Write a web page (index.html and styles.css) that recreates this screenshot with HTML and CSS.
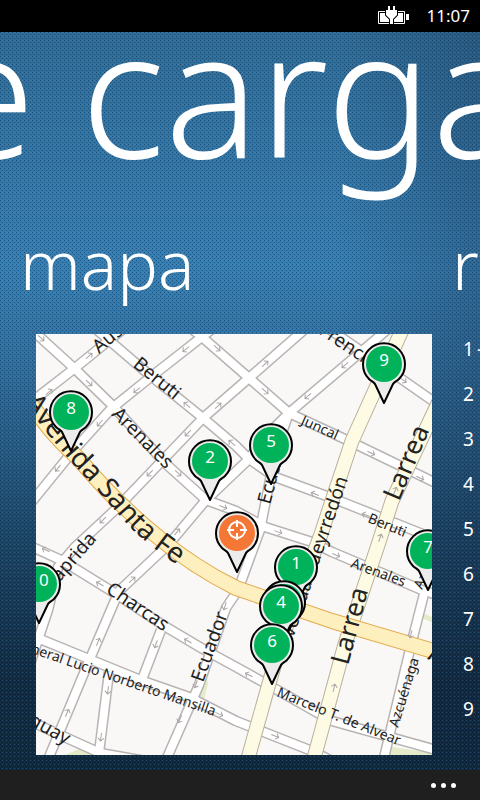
FILE: index.html
```html
<!DOCTYPE html>
<html lang="es">
<head>
<meta charset="utf-8">
<meta name="viewport" content="width=device-width, initial-scale=1">
<title>mapa</title>
<link rel="stylesheet" href="styles.css">
</head>
<body>
<div class="phone">
  <header class="status">
    <svg class="battery" viewBox="0 0 34 20" width="34" height="20" aria-hidden="true">
      <path d="M1.500 5.500H27.500V17.500H1.500Z" fill="none" stroke="#fff"/>
      <path d="M3 7H26V16H3Z" fill="#fff"/>
      <path d="M29 8H32V14H29Z" fill="#fff"/>
      <path class="plug" d="M11 0H13V4H16V0H18V4H20V9L16 13V18H13V13L9 9V4H11Z"/>
    </svg>
    <time class="clock">11:07</time>
  </header>
  <main class="panorama">
    <h1 class="title">e carga</h1>
    <div class="panels">
      <section class="panel panel-map">
        <h2 class="heading">mapa</h2>
        <svg class="map" viewBox="36 334 396 421" role="img" aria-label="mapa">
          <defs>
            <g id="pin">
              <path d="M0 39L-9 20C-10 18 -13 17 -15 15A21 21 0 1 1 15 15C13 17 10 18 9 20Z" fill="#ececec" stroke="#000" stroke-width="2" stroke-linejoin="round"/>
            </g>
            <path id="arrow" d="M-4 0H4M1 -3L4 0L1 3" fill="none" stroke="#aaa5a5" stroke-width="1"/>
            <g id="streets">
              <path d="M30 403L75 368L123 329"/>
              <path d="M30 328L75 369L113 406L166 464L206 500L236 511L265 527L312 542L332 552L422 590L440 596"/>
              <path d="M96 329L146 372L203 418L236 446L249 459L275 477L332 498L400 525L440 541"/>
              <path d="M212 329L152 376L111 409L73 451L30 504"/>
              <path d="M192 329L202 337L249 378L289 413L349 441L440 485"/>
              <path d="M305 329L249 378L203 418L159 464L116 509L74 548L58 567L48 610L39 637L28 670"/>
              <path d="M388 329L289 413L262 440L249 459L206 500L169 544L119 591L89 661L49 757"/>
              <path d="M289 413L283 430L270 480L260 530L238 590L226 608L199 685L166 760"/>
              <path d="M30 546L63 561L113 592L166 627L203 649L236 667L272 687L332 721L440 751"/>
              <path d="M30 635L89 659L143 681L189 697L236 721L312 751L330 760"/>
              <path d="M161 630L143 677"/>
              <path d="M109 672L99 753"/>
              <path d="M30 721L69 739L100 753L180 767"/>
              <path d="M322 324L400 378L440 406"/>
              <path d="M424 594L411 645L383 762"/>
            </g>
            <path id="santafe" d="M28 401L36 411Q54 437 78 458Q116 503 158 537Q192 566 236 588L332 621L440 653"/>
            <path id="pueyrredon" d="M403 328L352 441L320 537L285 630L270 680L247 762"/>
            <path id="larrea" d="M442 395L392 501L378 545L345 644L313 762"/>
            <path id="line-santafe" d="M-28 328Q27 412 73 464L91 483L126 523Q146 544 177 565"/>
          </defs>
          <rect x="36" y="334" width="396" height="421" fill="#faf8f7"/>
          <g fill="#e3ebc8">
            <path d="M205 670L208 684L203 703L196 700L204 684Z"/>
            <path d="M60 757L79 749L96 757Z"/>
            <path d="M423 613L432 617V622L421 618Z"/>
            <path d="M392 747L432 753V757H388Z"/>
          </g>
          <use href="#streets" fill="none" stroke="#b9b4b4" stroke-width="11" stroke-linejoin="round"/>
          <use href="#streets" fill="none" stroke="#fff" stroke-width="8" stroke-linejoin="round"/>
          <g fill="none" stroke-linejoin="round">
            <use href="#pueyrredon" stroke="#b9b09c" stroke-width="15"/>
            <use href="#larrea" stroke="#b9b09c" stroke-width="15"/>
            <use href="#pueyrredon" stroke="#fdfbe3" stroke-width="13"/>
            <use href="#larrea" stroke="#fdfbe3" stroke-width="13"/>
            <use href="#santafe" stroke="#e2ab4e" stroke-width="16"/>
            <use href="#santafe" stroke="#fef0be" stroke-width="14"/>
          </g>
          <g>
            <use href="#arrow" transform="translate(89 356) rotate(-40)"/>
            <use href="#arrow" transform="translate(41 338) rotate(43)"/>
            <use href="#arrow" transform="translate(89 383) rotate(44)"/>
            <use href="#arrow" transform="translate(49 392) rotate(-40)"/>
            <use href="#arrow" transform="translate(186 349) rotate(142)"/>
            <use href="#arrow" transform="translate(217 348) rotate(42)"/>
            <use href="#arrow" transform="translate(137 390) rotate(142)"/>
            <use href="#arrow" transform="translate(100 423) rotate(132)"/>
            <use href="#arrow" transform="translate(187 405) rotate(220)"/>
            <use href="#arrow" transform="translate(218 406) rotate(-42)"/>
            <use href="#arrow" transform="translate(188 433) rotate(134)"/>
            <use href="#arrow" transform="translate(232 443) rotate(220)"/>
            <use href="#arrow" transform="translate(150 473) rotate(134)"/>
            <use href="#arrow" transform="translate(178 473) rotate(43)"/>
            <use href="#arrow" transform="translate(58 468) rotate(129)"/>
            <use href="#arrow" transform="translate(103 520) rotate(134)"/>
            <use href="#arrow" transform="translate(177 532) rotate(-50)"/>
            <use href="#arrow" transform="translate(223 507) rotate(22)"/>
            <use href="#arrow" transform="translate(265 364) rotate(-42)"/>
            <use href="#arrow" transform="translate(265 391) rotate(41)"/>
            <use href="#arrow" transform="translate(345 365) rotate(140)"/>
            <use href="#arrow" transform="translate(308 396) rotate(140)"/>
            <use href="#arrow" transform="translate(371 453) rotate(25)"/>
            <use href="#arrow" transform="translate(420 478) rotate(25)"/>
            <use href="#arrow" transform="translate(315 494) rotate(201)"/>
            <use href="#arrow" transform="translate(366 515) rotate(201)"/>
            <use href="#arrow" transform="translate(278 532) rotate(20)"/>
            <use href="#arrow" transform="translate(336 555) rotate(22)"/>
            <use href="#arrow" transform="translate(403 380) rotate(35)"/>
            <use href="#arrow" transform="translate(395 491) rotate(-67)"/>
            <use href="#arrow" transform="translate(380 538) rotate(-70)"/>
            <use href="#arrow" transform="translate(334 688) rotate(-76)"/>
            <use href="#arrow" transform="translate(411 634) rotate(104)"/>
            <use href="#arrow" transform="translate(46 550) rotate(205)"/>
            <use href="#arrow" transform="translate(100 584) rotate(210)"/>
            <use href="#arrow" transform="translate(132 580) rotate(-43)"/>
            <use href="#arrow" transform="translate(98 642) rotate(-67)"/>
            <use href="#arrow" transform="translate(67 713) rotate(-67)"/>
            <use href="#arrow" transform="translate(156 644) rotate(111)"/>
            <use href="#arrow" transform="translate(188 641) rotate(209)"/>
            <use href="#arrow" transform="translate(108 690) rotate(97)"/>
            <use href="#arrow" transform="translate(101 737) rotate(97)"/>
            <use href="#arrow" transform="translate(225 606) rotate(108)"/>
            <use href="#arrow" transform="translate(196 684) rotate(110)"/>
            <use href="#arrow" transform="translate(180 719) rotate(113)"/>
            <use href="#arrow" transform="translate(219 714) rotate(24)"/>
            <use href="#arrow" transform="translate(249 675) rotate(207)"/>
            <use href="#arrow" transform="translate(275 736) rotate(21)"/>
          </g>
          <g class="street-names">
            <text class="avenue main" text-anchor="end"><textPath href="#line-santafe" startOffset="100%">Avenida Santa Fe</textPath></text>
            <text class="avenue" transform="translate(399 502) rotate(-67)">Larrea</text>
            <text class="avenue" transform="translate(348 666) rotate(-75)">Larrea</text>
            <text class="avenue" transform="translate(427 659) rotate(17)">A</text>
            <text class="road" transform="translate(99 354) rotate(-40)">Austria</text>
            <text class="road" transform="translate(132 366) rotate(39)">Beruti</text>
            <text class="road" transform="translate(111 415) rotate(45)">Arenales</text>
            <text class="road" transform="translate(318 333) rotate(34)">French</text>
            <text class="road" transform="translate(270 505) rotate(-75)">Ecuador</text>
            <text class="road" transform="translate(203 683) rotate(-70)">Ecuador</text>
            <text class="road" text-anchor="end" transform="translate(348 479) rotate(-71)">Avenida Pueyrredón</text>
            <text class="road" transform="translate(53 590) rotate(-49)">Laprida</text>
            <text class="road" transform="translate(105 592) rotate(34)">Charcas</text>
            <text class="road" text-anchor="end" transform="translate(66 745) rotate(29)">Paraguay</text>
            <text class="lane" transform="translate(300 424) rotate(24)">Juncal</text>
            <text class="lane" transform="translate(367 522) rotate(22)">Beruti</text>
            <text class="lane" transform="translate(350 567) rotate(20)">Arenales</text>
            <text class="lane" text-anchor="end" transform="translate(214 716) rotate(19)">General Lucio Norberto Mansilla</text>
            <text class="lane" transform="translate(276 696) rotate(22)">Marcelo T. de Alvear</text>
            <text class="lane" transform="translate(398 728) rotate(-73)">Azcuénaga</text>
            <text class="lane" transform="translate(422 590) rotate(-65)">Azcuénaga</text>
          </g>
          <g class="pins">
            <g transform="translate(384 364)"><use href="#pin"/><circle r="18"/><text y="2">9</text></g>
            <g transform="translate(71 412)"><use href="#pin"/><circle r="18"/><text y="2">8</text></g>
            <g transform="translate(428 551)"><use href="#pin"/><circle r="18"/><text y="2">7</text></g>
            <g transform="translate(210 461)"><use href="#pin"/><circle r="18"/><text y="2">2</text></g>
            <g transform="translate(271 445)"><use href="#pin"/><circle r="18"/><text y="2">5</text></g>
            <g transform="translate(39 584)"><use href="#pin"/><circle r="18"/><text y="2">10</text></g>
            <g transform="translate(296 567)"><use href="#pin"/><circle r="18"/><text y="2">1</text></g>
            <g transform="translate(284 602)"><use href="#pin"/><circle r="18"/></g>
            <g transform="translate(281 606)"><use href="#pin"/><circle r="18"/><text y="2">4</text></g>
            <g transform="translate(272 645)"><use href="#pin"/><circle r="18"/><text y="2">6</text></g>
            <g class="here" transform="translate(237 533)"><use href="#pin"/><circle r="18"/><path d="M8 -3A8 8 0 1 1 -8 -3A8 8 0 1 1 8 -3M0 -13V-6M0 0V7M-10 -3H-3M3 -3H10"/></g>
          </g>
        </svg>
      </section>
      <section class="panel panel-list">
        <h2 class="heading">r</h2>
        <ul class="results">
          <li>1&thinsp;-</li><li>2</li><li>3</li><li>4</li><li>5</li><li>6</li><li>7</li><li>8</li><li>9</li>
        </ul>
      </section>
    </div>
  </main>
  <footer class="appbar">
    <button class="more" type="button" aria-label="más"><span></span><span></span><span></span></button>
  </footer>
</div>
</body>
</html>
```
FILE: styles.css
```css
* { box-sizing: border-box; }
body { margin: 0; background: #000; }
h1, h2, ul { margin: 0; padding: 0; font-weight: 300; }

.phone {
  display: flex;
  flex-direction: column;
  min-height: 100vh;
  overflow: hidden;
  color: #fff;
  font-family: "Noto Sans", "Open Sans", sans-serif;
}

.status {
  display: flex;
  align-items: center;
  justify-content: flex-end;
  gap: 16px;
  height: 32px;
  padding-right: 10px;
  background: #000;
}
.battery { display: block; }
.plug { fill: #fff; stroke: #000; stroke-width: 2; paint-order: stroke; }
.clock { font-size: 17px; line-height: 32px; }

.panorama {
  flex: 1;
  overflow: hidden;
  padding-bottom: 15px;
  background:
    conic-gradient(at 1px 1px, transparent 75%, rgba(0, 20, 50, 0.4) 0) 0 0 / 4px 4px,
    conic-gradient(at 1px 1px, transparent 75%, rgba(0, 20, 50, 0.4) 0) 2px 2px / 4px 4px,
    conic-gradient(at 1px 1px, transparent 75%, rgba(110, 190, 245, 0.25) 0) 2px 0 / 4px 4px,
    linear-gradient(90deg, transparent 70%, rgba(20, 35, 60, 0.25)),
    linear-gradient(#2f6c97, #367fb3 32%, #306f9e 45%, #1d4767 68%, #122b40 88%, #102a3d);
}

.title {
  height: 200px;
  margin-left: -62px;
  font-size: 176px;
  line-height: 116px;
  white-space: nowrap;
}
.panels { display: flex; }
.panel { flex: none; }
.panel-map { width: 100%; padding: 0 48px 0 36px; }
.panel-list { margin-left: -28px; }
.heading {
  height: 102px;
  font-size: 68px;
  font-weight: 350;
  line-height: 64px;
  white-space: nowrap;
}
.panel-map .heading { margin-left: -16px; }
.map { display: block; width: 100%; height: auto; }

.street-names { fill: #222; }
.avenue { font-size: 26px; }
.avenue.main { font-size: 28px; }
.road { font-size: 19px; }
.lane { font-size: 14px; }

.pins circle { fill: #00b259; }
.pins text {
  fill: #fff;
  font-size: 17px;
  text-anchor: middle;
}
.pins .here circle { fill: #f47735; }
.pins .here path { fill: none; stroke: #fff; stroke-width: 2; }

.results {
  padding-left: 11px;
  list-style: none;
  font-size: 19px;
  font-weight: 400;
  line-height: 30px;
}
.results li { height: 45px; white-space: nowrap; }

.appbar {
  display: flex;
  justify-content: flex-end;
  height: 30px;
  background: #1f1f1f;
}
.more {
  display: flex;
  align-items: center;
  gap: 5px;
  padding: 0 24px;
  border: 0;
  background: none;
}
.more span { width: 5px; height: 5px; border-radius: 50%; background: #fff; }
```
